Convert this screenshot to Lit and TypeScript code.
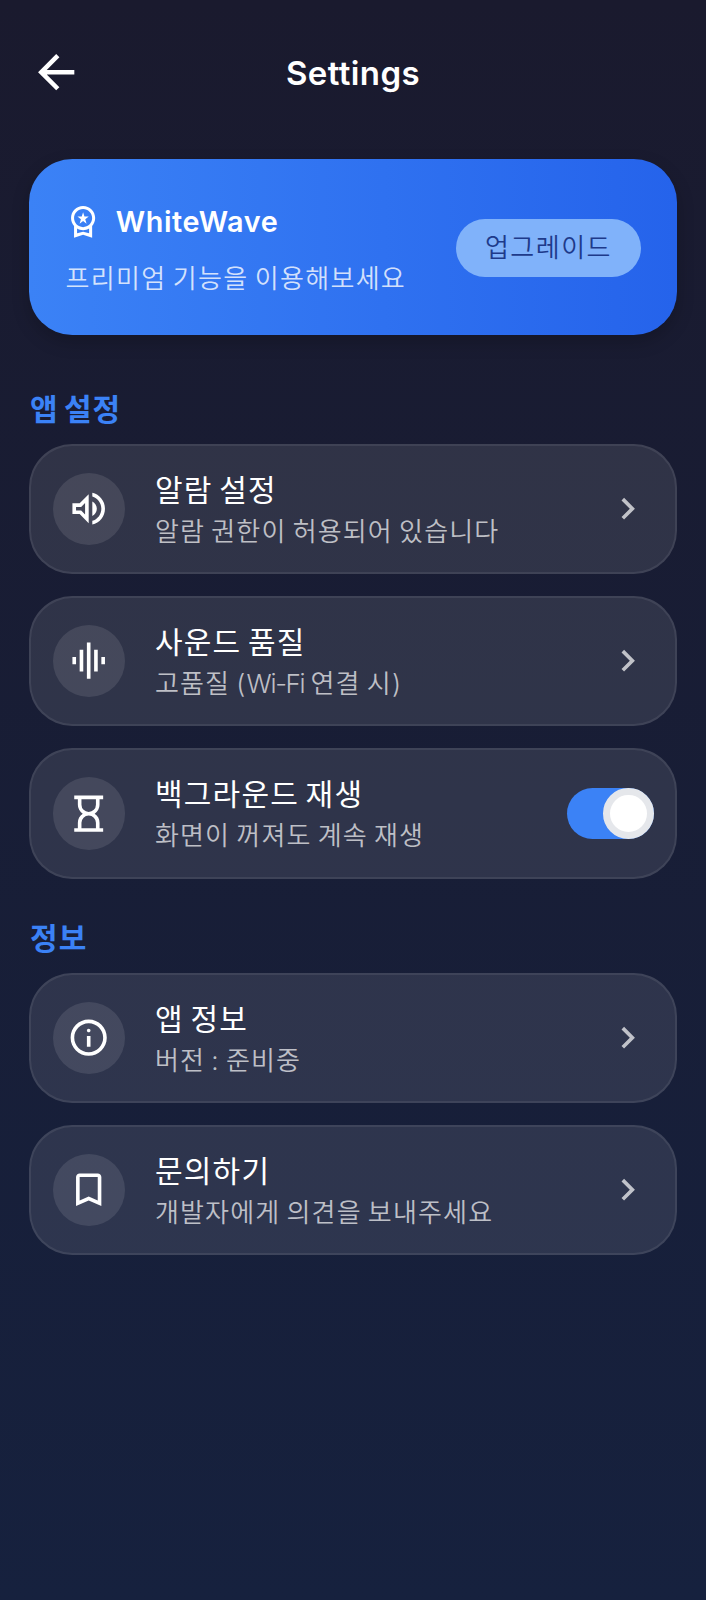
import { LitElement, html, css, svg } from "lit";
import { customElement, property } from "lit/decorators.js";

const ICONS: Record<string, string> = {
  back: "M20 11H7.83l5.59-5.59L12 4l-8 8 8 8 1.41-1.41L7.83 13H20v-2z",
  premium:
    "M9.68 13.69L12 11.93l2.31 1.76-.88-2.85L15.75 9h-2.84L12 6.19 11.09 9H8.25l2.31 1.84-.88 2.85zM20 10c0-4.42-3.58-8-8-8s-8 3.58-8 8c0 2.03.76 3.87 2 5.28V23l6-2 6 2v-7.72c1.24-1.41 2-3.25 2-5.28zm-8-6c3.31 0 6 2.69 6 6s-2.69 6-6 6-6-2.69-6-6 2.69-6 6-6zm0 15l-4 1.02v-3.1c1.18.68 2.54 1.08 4 1.08s2.82-.4 4-1.08v3.1L12 19z",
  volume:
    "M3 9v6h4l5 5V4L7 9H3zm7-.17v6.34L7.83 13H5v-2h2.83L10 8.83zM16.5 12c0-1.77-1.02-3.29-2.5-4.03v8.06c1.48-.74 2.5-2.25 2.5-4.03zM14 3.23v2.06c2.89.86 5 3.54 5 6.71s-2.11 5.85-5 6.71v2.06c4.01-.91 7-4.49 7-8.77 0-4.28-2.99-7.86-7-8.77z",
  equalizer:
    "M7 18h2V6H7v12zm4 4h2V2h-2v20zm-8-8h2v-4H3v4zm12 4h2V6h-2v12zm4-8v4h2v-4h-2z",
  hourglass:
    "M8 20h8v-3q0-1.65-1.175-2.825T12 13t-2.825 1.175T8 17zm4-9q1.65 0 2.825-1.175T16 7V4H8v3q0 1.65 1.175 2.825T12 11M4 22v-2h2v-3q0-1.525.713-2.863T8.7 12q-1.275-.8-1.987-2.137T6 7V4H4V2h16v2h-2v3q0 1.525-.712 2.863T15.3 12q1.275.8 1.988 2.138T18 17v3h2v2z",
  info: "M11 17h2v-6h-2zm1-8q.425 0 .713-.288T13 8t-.288-.712T12 7t-.712.288T11 8t.288.713T12 9zM12 2C6.48 2 2 6.48 2 12s4.48 10 10 10 10-4.48 10-10S17.52 2 12 2zm0 18c-4.41 0-8-3.59-8-8s3.59-8 8-8 8 3.59 8 8-3.59 8-8 8z",
  bookmark:
    "M5 21V5q0-.825.588-1.412T7 3h10q.825 0 1.413.588T19 5v16l-7-3zm2-3.05l5-2.15 5 2.15V5H7z",
  chevron: "M8.59 16.59L13.17 12 8.59 7.41 10 6l6 6-6 6z",
};

@customElement("ui-icon")
class UiIcon extends LitElement {
  @property() name = "";
  static styles = css`
    :host { display: block; flex: none; width: 43.4px; height: 43.4px; }
    svg { display: block; width: 100%; height: 100%; fill: currentColor; }
  `;
  render() {
    return html`<svg viewBox="0 0 24 24" aria-hidden="true">${svg`<path fill-rule="evenodd" d=${ICONS[this.name]}></path>`}</svg>`;
  }
}

@customElement("setting-row")
class SettingRow extends LitElement {
  @property() icon = "";
  @property() heading = "";
  @property() detail = "";
  @property({ type: Boolean }) toggle = false;
  static styles = css`
    :host {
      display: flex; align-items: center; box-sizing: border-box; height: 130.6px;
      padding: 0 21.4px 0 21.8px; border: 2px solid rgba(255, 255, 255, 0.08);
      border-radius: 43.4px; background: rgba(255, 255, 255, 0.1);
    }
    .badge {
      display: grid; place-items: center; flex: none; width: 72.4px; height: 72.4px;
      border-radius: 50%; background: rgba(255, 255, 255, 0.1); color: #fff;
    }
    .text { flex: 1; margin-left: 29.8px; padding-top: 3.4px; white-space: nowrap; }
    .heading { font-size: 30px; line-height: 42px; color: #fff; letter-spacing: 1.2px; word-spacing: -3px; }
    .detail {
      font-size: 26px; line-height: 41.6px; color: rgba(255, 255, 255, 0.7); font-weight: 350;
      letter-spacing: 1.15px; word-spacing: -2.3px;
    }
    .latin { letter-spacing: -1.3px; }
    .chevron { color: rgba(255, 255, 255, 0.7); margin-right: 4.6px; }
    .switch {
      display: flex; justify-content: flex-end; flex: none; width: 87px; height: 50.8px;
      border-radius: 26px; background: #3b82f6;
    }
    .thumb {
      box-sizing: border-box; width: 50.8px; height: 50.8px; border-radius: 50%;
      border: 7.2px solid #e5e7eb; background: #fff;
    }
  `;
  render() {
    const parts = this.detail.split(/([A-Za-z-]+)/);
    return html`
      <div class="badge"><ui-icon name=${this.icon}></ui-icon></div>
      <div class="text">
        <div class="heading">${this.heading}</div>
        <div class="detail">${parts.map((p, i) => (i % 2 ? html`<span class="latin">${p}</span>` : p))}</div>
      </div>
      ${this.toggle
        ? html`<div class="switch" role="switch" aria-checked="true"><div class="thumb"></div></div>`
        : html`<ui-icon class="chevron" name="chevron"></ui-icon>`}
    `;
  }
}

@customElement("app-root")
class AppRoot extends LitElement {
  static styles = css`
    :host {
      display: block; box-sizing: border-box; min-height: 1600px; padding: 0 29px;
      background: linear-gradient(180deg, #1a1a2e, #16213e);
      font-family: Inter, "Noto Sans CJK KR", sans-serif; color: #fff;
    }
    .bar { display: grid; grid-template-columns: 56px 1fr 56px; align-items: center; height: 145px; }
    .back { width: 54.4px; height: 54.4px; }
    .title { text-align: center; font-size: 33px; font-weight: 600; line-height: 44px; padding-top: 1px; letter-spacing: 0.4px; }
    .banner {
      display: flex; align-items: center; justify-content: space-between; box-sizing: border-box;
      height: 175.7px; margin-top: 14.3px; padding: 2px 36px 0; border-radius: 43.4px;
      background: linear-gradient(90deg, #3b82f6, #2563eb);
      box-shadow: 0 7px 18px rgba(0, 0, 0, 0.2); white-space: nowrap;
    }
    .brand {
      display: flex; align-items: center; gap: 14.5px; height: 44px; padding-top: 2.4px; font-size: 28.8px;
      font-weight: 600; letter-spacing: 0.6px;
    }
    .brand ui-icon { width: 36.2px; height: 36.2px; }
    .pitch {
      margin: 15.5px 0 0 0.6px; font-size: 26px; line-height: 40px; font-weight: 350;
      letter-spacing: 1.3px; word-spacing: -2.3px; color: rgba(255, 255, 255, 0.8);
    }
    .upgrade {
      height: 58px; padding: 0 29px; border: 0; border-radius: 29px; background: #80b2fa;
      color: #1e3a8a; font: 350 26px/54px Inter, "Noto Sans CJK KR", sans-serif; letter-spacing: 1.5px;
    }
    .section { display: flex; flex-direction: column; gap: 21.7px; }
    h2 {
      margin: 53.4px 0 -9.5px 1px; font-size: 30px; line-height: 43px; font-weight: 700;
      letter-spacing: 1.1px; word-spacing: -3px; color: #3b82f6;
    }
    h2.later { margin-top: 38.6px; }
  `;
  render() {
    return html`
      <header class="bar">
        <ui-icon class="back" name="back"></ui-icon>
        <div class="title">Settings</div>
      </header>
      <div class="banner">
        <div>
          <div class="brand"><ui-icon name="premium"></ui-icon><span>WhiteWave</span></div>
          <div class="pitch">프리미엄 기능을 이용해보세요</div>
        </div>
        <button class="upgrade">업그레이드</button>
      </div>
      <section class="section">
        <h2>앱 설정</h2>
        <setting-row icon="volume" heading="알람 설정" detail="알람 권한이 허용되어 있습니다"></setting-row>
        <setting-row icon="equalizer" heading="사운드 품질" detail="고품질 (Wi-Fi 연결 시)"></setting-row>
        <setting-row icon="hourglass" heading="백그라운드 재생" detail="화면이 꺼져도 계속 재생" toggle></setting-row>
      </section>
      <section class="section">
        <h2 class="later">정보</h2>
        <setting-row icon="info" heading="앱 정보" detail="버전 : 준비중"></setting-row>
        <setting-row icon="bookmark" heading="문의하기" detail="개발자에게 의견을 보내주세요"></setting-row>
      </section>
    `;
  }
}
